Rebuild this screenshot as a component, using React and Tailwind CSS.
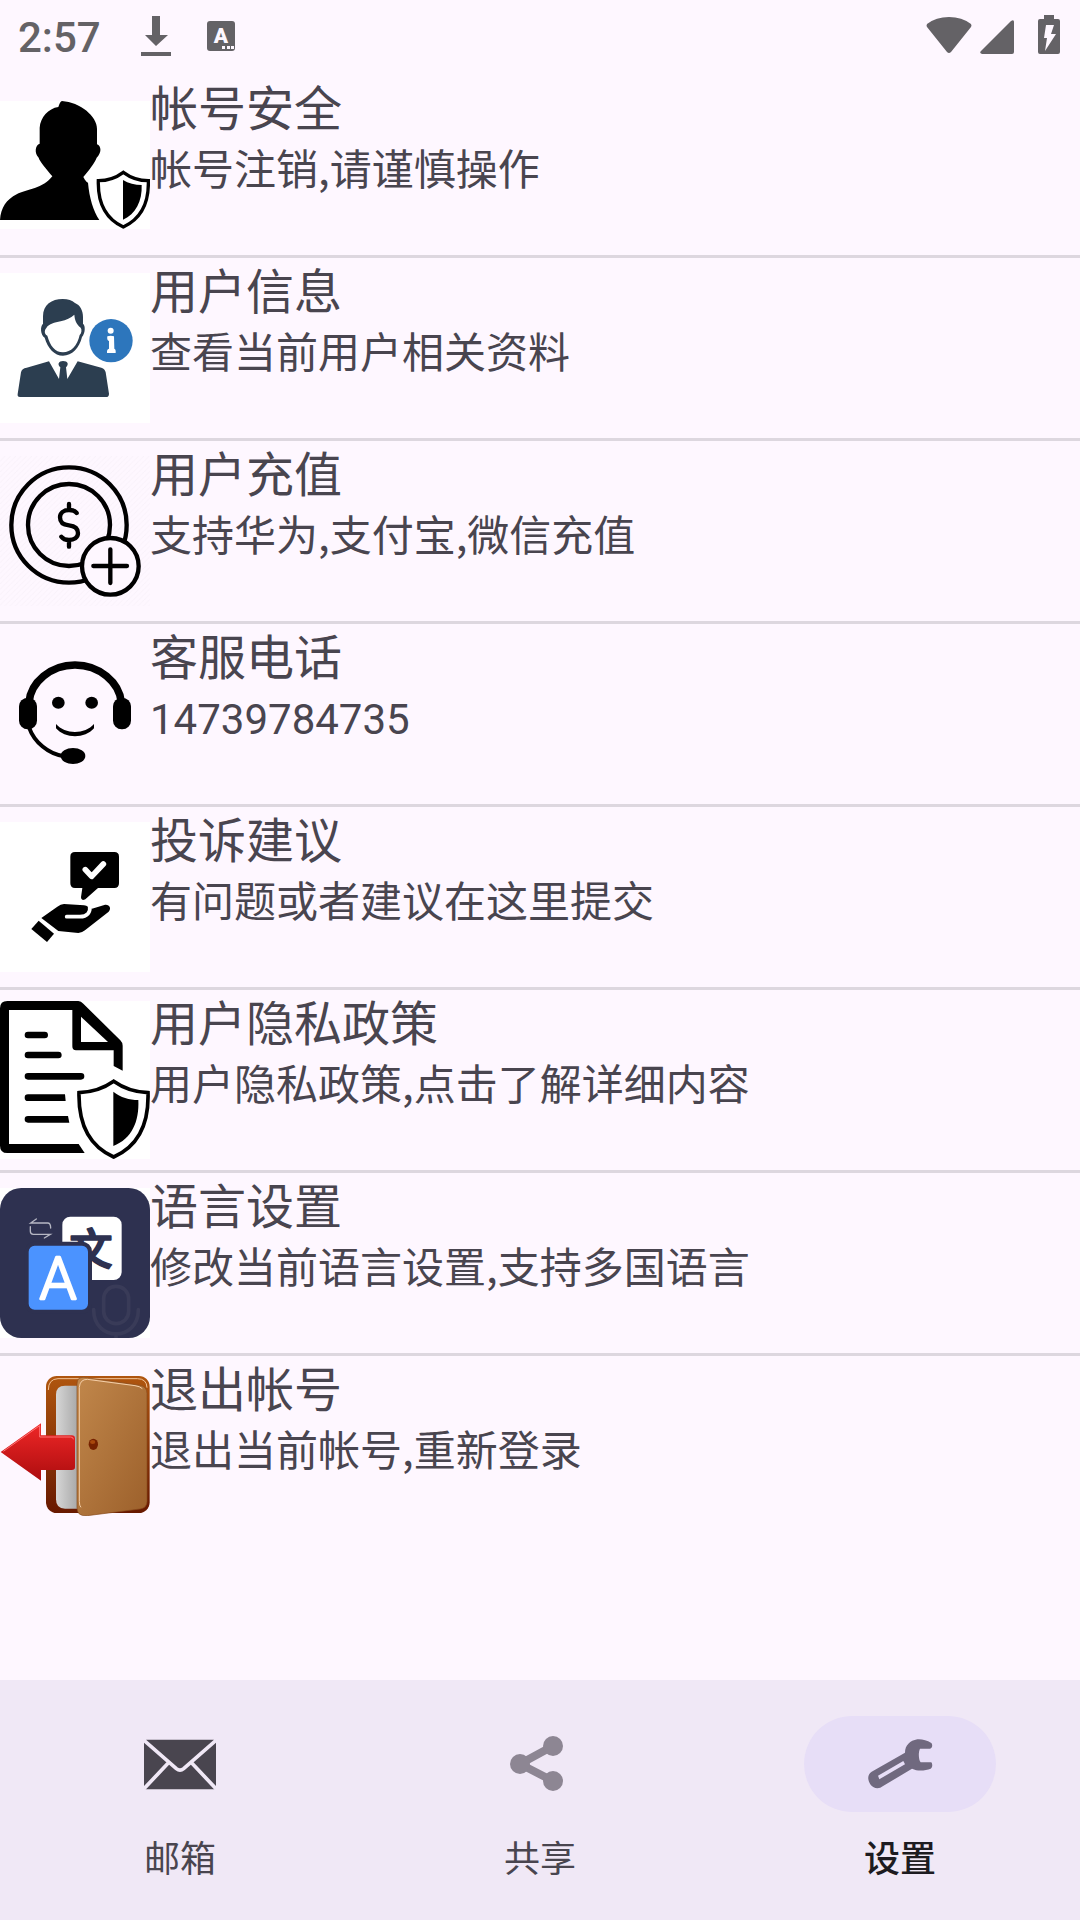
import React from "react";

function ShieldPerson() {
  return (
    <svg viewBox="0 0 450 384" className="w-full bg-white" aria-hidden="true">
      <path d="M186 0C240 4 291 45 291 84V130C304 135 306 155 290 170C285 185 265 210 250 228C256 240 260 243 264 245C268 290 280 330 298 357H0C2 320 20 295 50 280C80 265 130 262 157 226C140 205 118 180 116 170C102 155 106 132 119 128V80C121 50 145 22 175 18C178 8 182 0 186 0Z" />
      <path d="M370 214C346 232 322 239 295 239C293 306 316 353 370 378C424 353 447 306 445 239C418 239 394 232 370 214Z" fill="#fff" stroke="#000" strokeWidth="10" />
      <path d="M369 237C385 247 405 252 425 252C427 300 407 340 369 356Z" />
    </svg>
  );
}

function UserInfo() {
  return (
    <svg viewBox="0 0 450 450" className="w-full bg-white" aria-hidden="true">
      <path fill="#2c3e50" d="M129 152V130C129 95 155 78 188 78C205 78 216 82 225 90C240 96 249 112 249 132V152C257 158 256 180 246 192C238 225 216 248 189 248C163 248 143 225 134 194C121 185 120 160 129 152Z" />
      <path fill="#fff" d="M139 165C148 151 163 150 182 145C199 141 212 135 223 125C224 140 229 154 242 164C246 169 245 181 239 186C232 218 213 238 189 238C165 238 150 218 142 188C133 183 132 173 139 165Z" />
      <path fill="#2c3e50" d="M53 363L63 298C65 289 70 286 80 284L147 265L177 318L181 283C171 274 176 264 189 264C204 264 207 274 198 283L202 318L233 265L304 284C312 287 315 290 317 298L327 362C327 369 324 372 318 372H60C54 372 52 369 53 363Z" />
      <circle cx="333" cy="203" r="65" fill="#2d76bc" />
      <circle cx="332" cy="173" r="9" fill="#fff" />
      <path fill="#fff" d="M322 190Q332 186 342 190L343 227Q348 228 347 240H321Q320 228 327 227V204Q320 202 322 190Z" />
    </svg>
  );
}

function CoinPlus() {
  return (
    <svg viewBox="0 0 450 450" className="w-full" fill="none" stroke="#000" strokeWidth="13" strokeLinecap="round" aria-hidden="true">
      <defs>
        <pattern id="hatch" width="16" height="16" patternUnits="userSpaceOnUse">
          <path d="M0 16L16 0" stroke="#f9f2fa" strokeWidth="3" />
        </pattern>
      </defs>
      <rect width="450" height="450" fill="url(#hatch)" stroke="none" />
      <circle cx="207" cy="207" r="173" />
      <circle cx="207" cy="207" r="123" />
      <path d="M230 171C226 165 218 162 207 162C190 162 180 172 180 184C180 200 192 207 207 208C225 210 234 217 234 231C234 245 222 252 207 252C196 252 189 249 184 242M207 144V161M207 253V272" />
      <circle cx="331" cy="331" r="85" fill="#fef7ff" />
      <path d="M331 280V381M280 330H381" />
    </svg>
  );
}

function Headset() {
  return (
    <svg viewBox="0 0 450 450" className="w-full" aria-hidden="true">
      <path d="M87 190C92 130 152 78 225 78C298 78 358 130 364 190" fill="none" stroke="#000" strokeWidth="23" />
      <rect x="57" y="176" width="54" height="95" rx="26" />
      <rect x="339" y="176" width="54" height="95" rx="26" />
      <ellipse cx="175" cy="191" rx="19" ry="18" />
      <ellipse cx="275" cy="191" rx="19" ry="18" />
      <path d="M168 255C195 287 255 287 282 255V268C255 300 195 300 168 268Z" />
      <path d="M87 265C103 310 145 345 192 352" fill="none" stroke="#000" strokeWidth="12" />
      <ellipse cx="219" cy="351" rx="37" ry="24" />
    </svg>
  );
}

function HandFeedback() {
  return (
    <svg viewBox="0 0 450 450" className="w-full bg-white" aria-hidden="true">
      <path d="M225 90H343Q357 90 357 104V184Q357 198 343 198H294L256 232Q243 238 243 226L247 198H225Q211 198 211 184V104Q211 90 225 90Z" />
      <path d="M256 143L275 163L310 126" fill="none" stroke="#fff" strokeWidth="17" strokeLinecap="round" strokeLinejoin="round" />
      <path d="M124 288L172 254Q182 246 192 246L252 250C262 251 268 259 276 260L313 249C329 246 335 260 326 269L255 325Q245 333 235 333L175 327Z" />
      <path d="M200 284H240C262 284 272 270 269 254" fill="none" stroke="#fff" strokeWidth="11" strokeLinecap="round" />
      <path d="M116 296L162 335L141 360L94 321Z" />
    </svg>
  );
}

function ShieldDocument() {
  return (
    <svg viewBox="0 0 450 474" className="w-full bg-white" aria-hidden="true">
      <path d="M22 0H235Q243 1 250 8L361 118Q368 125 368 134V209L341 195V148H228Q217 148 217 136V27H27V429H236L254 456H22Q0 456 0 434V22Q0 0 22 0Z" />
      <path d="M243 47L324 123H243Z" fill="#fff" />
      <path d="M84 102H134M84 162H175M84 226H243" stroke="#000" strokeWidth="20" strokeLinecap="round" />
      <path d="M84 280H195L197 300H84A10 10 0 0 1 84 280ZM84 345H204L208 365H84A10 10 0 0 1 84 345Z" />
      <path d="M341 241C310 263 276 274 237 275C235 372 268 436 341 468C414 436 447 372 444 275C406 274 372 263 341 241Z" fill="#fff" stroke="#000" strokeWidth="11" />
      <path d="M340 272C362 289 388 297 415 297C418 362 396 413 340 435Z" />
    </svg>
  );
}

function Translate() {
  return (
    <svg viewBox="0 0 450 450" className="w-full bg-white" aria-hidden="true">
      <rect width="450" height="450" rx="64" fill="#2e3150" />
      <rect x="187" y="86" width="178" height="190" rx="24" fill="#fff" />
      <text x="273" y="230" textAnchor="middle" fontSize="130" fontWeight="500" fill="#2e3150" stroke="#2e3150" strokeWidth="5" strokeLinejoin="round" fontFamily="Noto Sans CJK SC, sans-serif">文</text>
      <rect x="80" y="167" width="190" height="204" rx="24" fill="#4b93ff" stroke="#2e3150" strokeWidth="12" />
      <text x="174" y="333" textAnchor="middle" fontSize="178" fontWeight="300" fill="#fff" stroke="#fff" strokeWidth="7" strokeLinejoin="round" fontFamily="Roboto, sans-serif">A</text>
      <path d="M109 93L92 105H143Q152 105 152 120M91 116V130Q91 139 100 139H151L133 150" fill="none" stroke="#b6b7c3" strokeWidth="4" strokeLinecap="round" />
      <g fill="none" stroke="#393b58" strokeWidth="11" strokeLinecap="round">
        <rect x="311" y="295" width="75" height="112" rx="37" />
        <path d="M281 365C281 462 415 462 415 365M348 440V450" />
      </g>
    </svg>
  );
}

function ExitDoor() {
  return (
    <svg viewBox="0 0 450 420" className="w-full" aria-hidden="true">
      <defs>
        <linearGradient id="frame" x1="0" y1="0" x2="0" y2="1">
          <stop offset="0" stopColor="#b0560f" />
          <stop offset="1" stopColor="#681900" />
        </linearGradient>
        <linearGradient id="room" x1="0" y1="0" x2="1" y2="0">
          <stop offset="0" stopColor="#d6d6d6" />
          <stop offset="1" stopColor="#a4a4a4" />
        </linearGradient>
        <linearGradient id="door" x1="0" y1="0" x2="1" y2="1">
          <stop offset="0" stopColor="#c1874b" />
          <stop offset="1" stopColor="#9c602b" />
        </linearGradient>
        <linearGradient id="arrow" x1="0" y1="0" x2="0" y2="1">
          <stop offset="0" stopColor="#ef2727" />
          <stop offset="1" stopColor="#ad0d0f" />
        </linearGradient>
      </defs>
      <rect x="138" y="0" width="311" height="411" rx="32" fill="url(#frame)" />
      <path d="M145 42Q145 9 174 8H412Q440 8 441 35" fill="none" stroke="#f3c498" strokeWidth="3" />
      <path d="M232 29H195Q168 29 168 56V370Q168 398 195 398H240V29Z" fill="url(#room)" />
      <path d="M231 24Q231 2 252 4L420 28Q441 32 441 52V376Q441 396 420 399L262 419Q231 422 231 395Z" fill="url(#door)" stroke="#8a4c1c" strokeWidth="2" />
      <path d="M243 394Q238 390 238 376V34Q240 10 262 10L405 29Q420 31 427 38" fill="none" stroke="#f5cfa9" strokeWidth="3" />
      <ellipse cx="280" cy="205" rx="14" ry="17" fill="#762200" />
      <ellipse cx="278" cy="198" rx="8" ry="6" fill="#a8480c" />
      <path d="M2 228L123 142V178H215Q225 178 225 187V274Q225 282 215 282H123V314Z" fill="url(#arrow)" />
      <path d="M10 226L119 149V183H212Q220 183 220 190" fill="none" stroke="#ff7272" strokeWidth="3" />
    </svg>
  );
}

const settings = [
  { title: "帐号安全", detail: "帐号注销,请谨慎操作", Icon: ShieldPerson },
  { title: "用户信息", detail: "查看当前用户相关资料", Icon: UserInfo },
  { title: "用户充值", detail: "支持华为,支付宝,微信充值", Icon: CoinPlus },
  { title: "客服电话", detail: "14739784735", Icon: Headset, numeric: true },
  { title: "投诉建议", detail: "有问题或者建议在这里提交", Icon: HandFeedback },
  { title: "用户隐私政策", detail: "用户隐私政策,点击了解详细内容", Icon: ShieldDocument },
  { title: "语言设置", detail: "修改当前语言设置,支持多国语言", Icon: Translate },
  { title: "退出帐号", detail: "退出当前帐号,重新登录", Icon: ExitDoor },
];

function MailIcon() {
  return (
    <svg viewBox="0 0 216 216" className="size-18" aria-hidden="true">
      <rect y="35" width="216" height="149" rx="8" fill="#49454f" />
      <path d="M0 37L97 122Q108 131 119 122L216 37M0 182L72 106M216 182L144 106" fill="none" stroke="#f0e8f6" strokeWidth="11" />
    </svg>
  );
}

function ShareIcon() {
  return (
    <svg viewBox="0 0 72 72" className="size-18" fill="#8d8693" aria-hidden="true">
      <path d="M49 18L16 36L49 53" fill="none" stroke="#8d8693" strokeWidth="8" />
      <circle cx="16" cy="36" r="10" />
      <circle cx="49" cy="18" r="10" />
      <circle cx="49" cy="53" r="10" />
    </svg>
  );
}

function WrenchIcon() {
  return (
    <svg viewBox="252 204 216 216" className="size-18" aria-hidden="true">
      <path fill="#70697f" d="M375 278L275 335C254 348 268 384 292 385C299 385 303 382 308 379L396 326C415 335 437 331 452 326C458 322 458 312 454 307H422C415 298 415 276 420 266H450C458 264 458 253 454 249C440 240 425 237 412 238C390 242 375 256 375 278Z" />
      <path fill="#e7def7" d="M294 347L370 303L375 313L298 358Z" />
    </svg>
  );
}

const tabs = [
  { label: "邮箱", Icon: MailIcon },
  { label: "共享", Icon: ShareIcon },
  { label: "设置", Icon: WrenchIcon, active: true },
];

function StatusBar() {
  return (
    <header className="flex h-[75px] items-start justify-between pt-3 pr-5 pl-[18px] text-[#646266]">
      <div className="flex items-start">
        <time className="text-[42px] leading-[52px] font-medium">2:57</time>
        <svg viewBox="0 0 30 48" className="ml-10 h-12 w-[30px]" fill="currentColor" aria-label="下载">
          <path d="M11 4H19V23H27L15 34L4 23H11ZM0 40H30V44H0Z" />
        </svg>
        <svg viewBox="0 0 28 48" className="ml-9 h-12 w-7" fill="currentColor" aria-label="输入法">
          <rect y="9" width="28" height="30" rx="3" />
          <text x="14" y="31" textAnchor="middle" fontSize="21" fontWeight="900" fill="#fef7ff" fontFamily="Roboto, sans-serif">A</text>
          <path d="M15 34h3v3h-3zM20 34h3v3h-3zM24 34h3v3h-3z" fill="#fef7ff" />
        </svg>
      </div>
      <div className="flex items-start">
        <svg viewBox="0 0 46 48" className="h-12 w-[46px]" fill="currentColor" aria-label="Wi-Fi">
          <path d="M1 12Q10 5 23 5T45 12Q46 14 45 15L25 40Q23 42 21 40L1 15Q0 14 1 12Z" />
        </svg>
        <svg viewBox="0 0 34 48" className="ml-2 h-12 w-[34px]" fill="currentColor" aria-label="信号">
          <path d="M31 9Q34 7 34 10V40Q34 42 32 42H2Q-1 41 1 39Z" />
        </svg>
        <svg viewBox="0 0 22 48" className="ml-6 h-12 w-[22px]" fill="currentColor" aria-label="电池">
          <path d="M6 3H16V7H20Q22 7 22 9V40Q22 42 20 42H2Q0 42 0 40V9Q0 7 2 7H6Z" />
          <path d="M8 13H16L13 22H18L7 39L9 26H6Z" fill="#fef7ff" />
        </svg>
      </div>
    </header>
  );
}

export default function App() {
  return (
    <div className="flex min-h-screen flex-col bg-[#fef7ff] font-['Roboto','Noto_Sans_CJK_SC',sans-serif] text-[#49454f]">
      <StatusBar />
      <main className="flex-1">
        <ul className="divide-y-3 divide-[#ddd7df]">
          {settings.map(({ title, detail, Icon, numeric }) => (
            <li key={title}>
              <button type="button" className="flex min-h-[180px] w-full items-center text-left">
                <span className="w-[150px] shrink-0">
                  <Icon />
                </span>
                <span className="flex flex-col self-stretch pt-[5px]">
                  <span className="text-[48px] leading-[60px]">{title}</span>
                  <span
                    className={
                      numeric
                        ? "text-[42px] leading-[62px]"
                        : "font-['Noto_Sans_CJK_SC',sans-serif] text-[42px] leading-[54px]"
                    }
                  >
                    {detail}
                  </span>
                </span>
              </button>
            </li>
          ))}
        </ul>
      </main>
      <nav className="grid h-60 grid-cols-3 bg-[#f0e8f6]">
        {tabs.map(({ label, Icon, active }) => (
          <button key={label} type="button" aria-current={active ? "page" : undefined} className="flex flex-col items-center pt-9">
            <span className={active ? "flex h-24 w-48 items-center justify-center rounded-full bg-[#e7def7]" : "flex h-24 w-48 items-center justify-center"}>
              <Icon />
            </span>
            <span className={active ? "mt-5 text-[36px] leading-[56px] font-medium text-[#1d1b20]" : "mt-5 text-[36px] leading-[56px]"}>{label}</span>
          </button>
        ))}
      </nav>
    </div>
  );
}
